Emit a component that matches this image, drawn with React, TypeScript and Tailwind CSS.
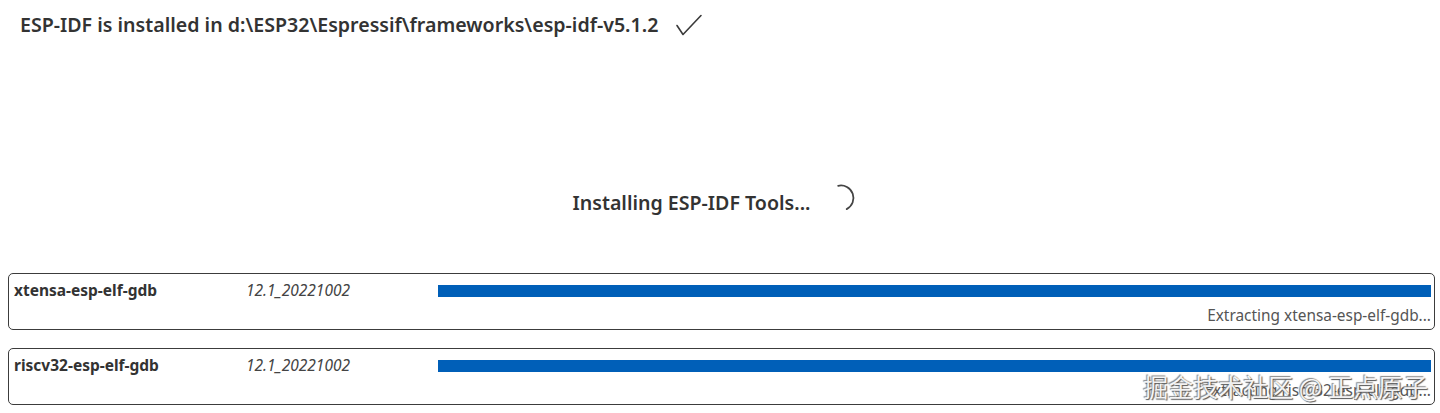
import React from 'react';

const tools = [
  { name: 'xtensa-esp-elf-gdb', version: '12.1_20221002', status: 'Extracting xtensa-esp-elf-gdb...' },
  { name: 'riscv32-esp-elf-gdb', version: '12.1_20221002', status: 'Extracting riscv32-esp-elf-gdb...' },
];

const Check = () => (
  <svg width="28" height="24" viewBox="0 0 28 24" fill="none" className="ml-[17px]">
    <path d="M2 12.5 L8 21.5 L26 2.5" stroke="#3a3a3a" strokeWidth="1.6" strokeLinecap="round" strokeLinejoin="round" />
  </svg>
);

const Spinner = () => (
  <svg width="30" height="30" viewBox="0 0 30 30" fill="none" className="ml-[16px] -mt-[10px]">
    <path d="M12.2 2.8 A12.5 12.5 0 0 1 20.7 26.1" stroke="#444" strokeWidth="1.8" strokeLinecap="round" />
  </svg>
);

const App = () => {
  return (
    <div className="relative w-full h-[413px] bg-white text-[#333] overflow-hidden" style={{ fontFamily: '"Noto Sans", "Open Sans", sans-serif' }}>
      {/* Header */}
      <div className="flex items-center pl-5 pt-[11px]">
        <h1 className="text-[19.6px] leading-[28px] font-semibold">ESP-IDF is installed in d:\ESP32\Espressif\frameworks\esp-idf-v5.1.2</h1>
        <Check />
      </div>

      {/* Installing status */}
      <div className="flex items-center justify-center mt-[150px] pr-[11px]">
        <h2 className="text-[19.6px] leading-[28px] font-semibold">Installing ESP-IDF Tools...</h2>
        <Spinner />
      </div>

      {/* Tool rows */}
      <div className="mt-[56px] ml-2 mr-[5px] flex flex-col gap-[18px]">
        {tools.map((t) => (
          <div key={t.name} className="border border-[#3c3c3c] rounded-[5px] pl-[5px] pr-[3px] pt-[7px] pb-[3px]">
            <div className="flex items-center h-[20px] text-[15.5px]">
              <span className="w-[232px] font-bold">{t.name}</span>
              <span className="w-[192px] italic text-[#444]">{t.version}</span>
              <div className="flex-1 h-[12px] bg-[#005fb8]" />
            </div>
            <div className="mt-[5px] h-[20px] text-right text-[15.4px] leading-[20px] text-[#555]">{t.status}</div>
          </div>
        ))}
      </div>

      {/* Watermark */}
      <div
        className="absolute right-[12px] bottom-[12px] text-[25px] leading-[30px] text-white/90"
        style={{ fontFamily: '"Noto Sans CJK SC", sans-serif', textShadow: '1px 1px 1px #555, -1px -1px 1px #888' }}
      >
        掘金技术社区 @ 正点原子
      </div>
    </div>
  );
};

export default App;
